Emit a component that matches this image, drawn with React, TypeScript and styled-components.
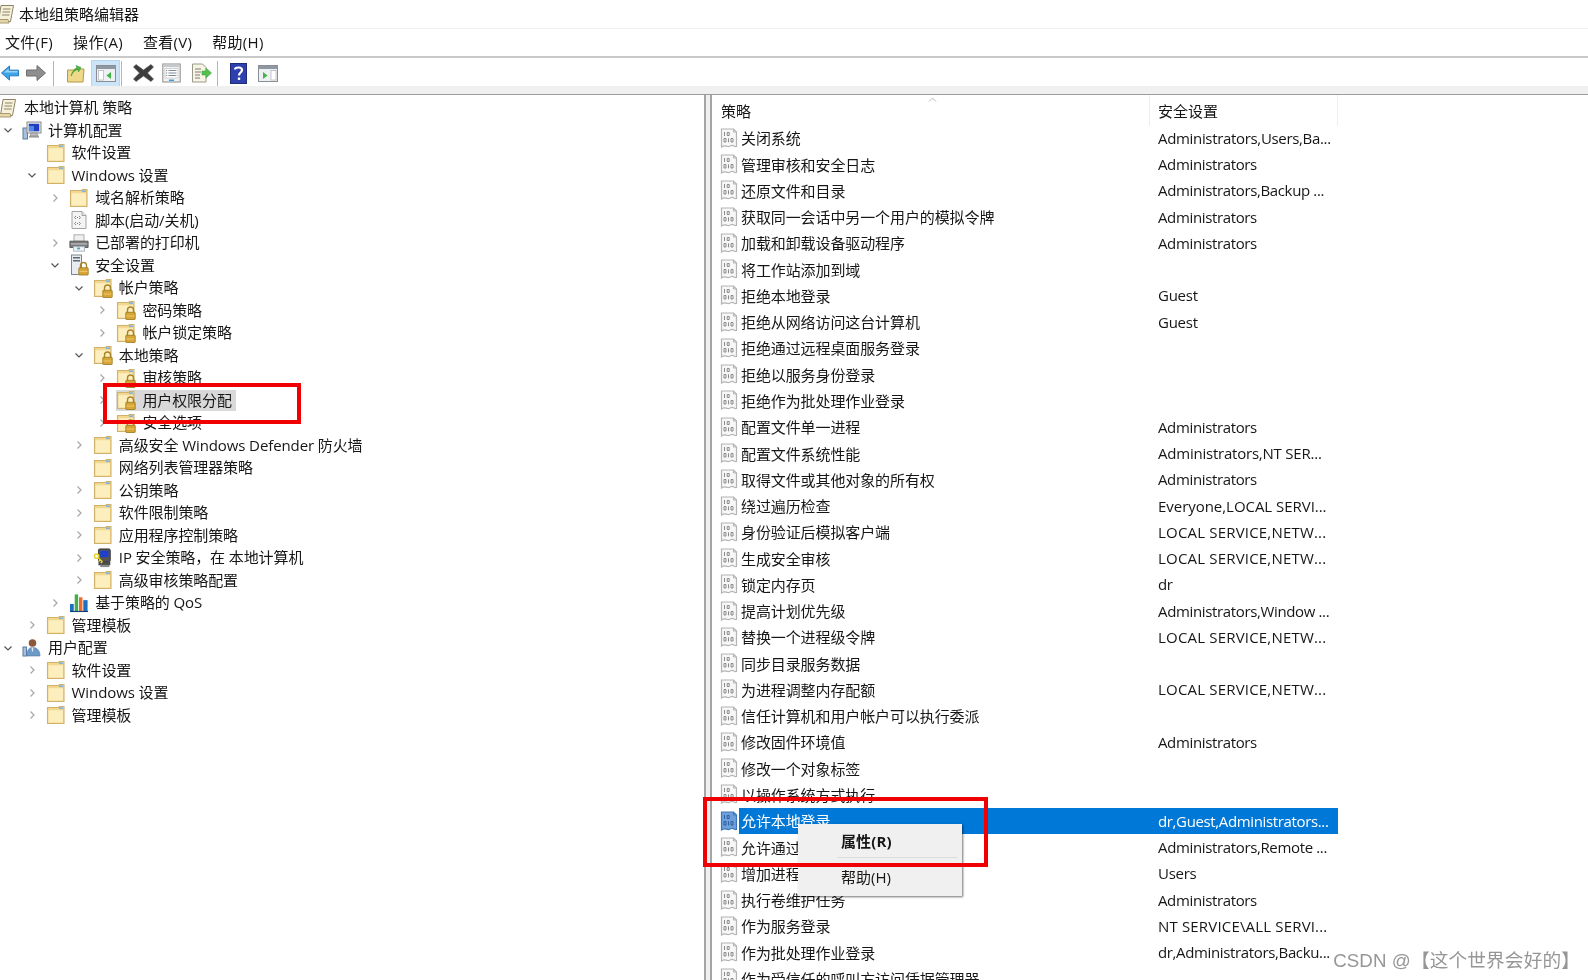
import React from "react";
import styled, { createGlobalStyle } from "styled-components";

const FONT = `"Open Sans", "Noto Sans CJK SC", sans-serif`;
const INK = "#161616";

const Global = createGlobalStyle`
  html, body { margin: 0; padding: 0; background: #fff; }
  body { width: 1588px; height: 980px; overflow: hidden; font-family: ${FONT}; color: ${INK}; }
`;

const Window = styled.div`
  position: relative;
  width: 1588px;
  height: 980px;
  overflow: hidden;
  display: flex;
  flex-direction: column;
  background: #fff;
  font-size: 15px;
  filter: blur(0.45px);
`;
const TitleBar = styled.div`
  height: 29px;
  display: flex;
  align-items: center;
  gap: 3px;
  padding-bottom: 1px;
  font-size: 15px;
  color: #111;
  border-bottom: 1px solid #f0f0f0;
  box-sizing: border-box;
  svg { margin-left: -4px; }
`;
const MenuBar = styled.div`
  height: 29px;
  display: flex;
  align-items: center;
  gap: 20px;
  padding: 0 0 2px 5px;
  box-sizing: border-box;
  border-bottom: 2px solid #c9c9c9;
`;
const MenuItem = styled.span`
  color: ${INK};
  letter-spacing: 0.3px;
`;
const ToolBar = styled.div`
  height: 28px;
  padding-top: 2px;
  box-sizing: border-box;
  display: flex;
  align-items: center;
  background: #fff;
`;
const ToolBtn = styled.div<{ $w?: number; $active?: boolean }>`
  width: ${(p) => p.$w ?? 29}px;
  height: 27px;
  display: flex;
  align-items: center;
  justify-content: center;
  flex: none;
  box-sizing: border-box;
  background: ${(p) => (p.$active ? "#cce4f7" : "transparent")};
  border: 1px solid ${(p) => (p.$active ? "#b4d7f2" : "transparent")};
`;
const ToolSep = styled.div`
  width: 1px;
  height: 25px;
  margin: 0 7px 0 1px;
  background: #b5b5b5;
  flex: none;
`;
const Strip = styled.div`
  height: 8px;
  background: #f0f0f0;
  border-bottom: 1px solid #9c9c9c;
`;
const Panes = styled.div`
  flex: 1;
  min-height: 0;
  display: flex;
  background: #f0f0f0;
`;
const LeftPane = styled.div`
  width: 706px;
  box-sizing: border-box;
  border-right: 2px solid #a5a5a5;
  background: #fff;
  padding-top: 1.5px;
  overflow: hidden;
`;
const RightPane = styled.div`
  margin-left: 4px;
  flex: 1;
  min-width: 0;
  border-left: 2px solid #a5a5a5;
  background: #fff;
  overflow: hidden;
  position: relative;
`;
const TreeRow = styled.div<{ $level: number }>`
  height: 22.5px;
  display: flex;
  align-items: center;
  padding-left: ${(p) => p.$level}px;
  white-space: nowrap;
`;
const Chevron = styled.span`
  width: 16px;
  height: 16px;
  display: flex;
  align-items: center;
  justify-content: center;
  flex: none;
`;
const TreeItem = styled.span<{ $sel?: boolean; $root?: boolean }>`
  display: flex;
  align-items: center;
  height: 21px;
  margin-left: ${(p) => (p.$root ? -2 : 6)}px;
  padding-right: 4px;
  background: ${(p) => (p.$sel ? "#d9d9d9" : "transparent")};
`;
const IconBox = styled.span`
  width: 20px;
  height: 20px;
  margin-right: 6px;
  display: flex;
  align-items: center;
  justify-content: center;
  flex: none;
`;
const TreeLabel = styled.span`
  color: ${INK};
  letter-spacing: -0.1px;
  line-height: 21px;
`;
const ListHeader = styled.div`
  height: 31px;
  width: 626px;
  margin-bottom: -1.3px;
  display: grid;
  grid-template-columns: 438px 188px;
  align-items: center;
  color: ${INK};
  position: relative;
`;
const HeaderCell = styled.div<{ $first?: boolean }>`
  height: 31px;
  display: flex;
  align-items: center;
  box-sizing: border-box;
  padding-left: ${(p) => (p.$first ? 9 : 8)}px;
  border-right: 1px solid #eeeeee;
`;
const SortCaret = styled.svg`
  position: absolute;
  left: 216px;
  top: 2px;
`;
const ListRow = styled.div`
  height: 26.27px;
  width: 626px;
  display: grid;
  grid-template-columns: 27px 411px 188px;
  align-items: center;
  white-space: nowrap;
`;
const RowIcon = styled.span`
  padding-left: 8px;
  display: flex;
  align-items: center;
`;
const RowName = styled.span<{ $sel?: boolean }>`
  height: 100%;
  display: flex;
  align-items: center;
  letter-spacing: -0.1px;
  padding-left: 2px;
  color: ${(p) => (p.$sel ? "#fff" : INK)};
  background: ${(p) => (p.$sel ? "#0078d7" : "transparent")};
`;
const RowValue = styled.span<{ $sel?: boolean; $track: number }>`
  height: 100%;
  display: flex;
  align-items: center;
  padding-left: 8px;
  letter-spacing: ${(p) => p.$track}px;
  color: ${(p) => (p.$sel ? "#fff" : INK)};
  background: ${(p) => (p.$sel ? "#0078d7" : "transparent")};
`;
const ContextMenu = styled.div`
  position: absolute;
  left: 798px;
  top: 824px;
  width: 164px;
  height: 72px;
  box-sizing: border-box;
  background: #f0f0f0;
  box-shadow: 1px 1px 2px rgba(0, 0, 0, 0.55);
  display: flex;
  flex-direction: column;
  padding-left: 43px;
`;
const MenuEntry = styled.div<{ $bold?: boolean }>`
  height: ${(p) => (p.$bold ? 33 : 36)}px;
  display: flex;
  align-items: center;
  font-weight: ${(p) => (p.$bold ? 700 : 400)};
  color: ${INK};
  letter-spacing: ${(p) => (p.$bold ? 0.1 : 0)}px;
`;
const MenuDivider = styled.div`
  height: 1px;
  margin-left: -4px;
  margin-right: 4px;
  background: #dcdcdc;
`;
const RedBox = styled.div<{ $x: number; $y: number; $w: number; $h: number }>`
  position: absolute;
  left: ${(p) => p.$x}px;
  top: ${(p) => p.$y}px;
  width: ${(p) => p.$w}px;
  height: ${(p) => p.$h}px;
  box-sizing: border-box;
  border: 4px solid #f00000;
  pointer-events: none;
`;
const Watermark = styled.div`
  position: absolute;
  right: 8px;
  bottom: 8px;
  font-family: "Liberation Sans", "Noto Sans CJK SC", sans-serif;
  font-size: 18.7px;
  letter-spacing: 0.1px;
  color: #969696;
  background: rgba(255, 255, 255, 0.55);
  white-space: nowrap;
`;

const Lock = () => (
  <g>
    <path d="M11.5 12.500v-2.500a3 3 0 016 0v2.500" fill="none" stroke="#a8842a" strokeWidth="1.400" />
    <rect x="9.800" y="12.300" width="9.400" height="7.200" rx=".6" fill="#d8a636" stroke="#97761f" strokeWidth=".8" />
    <rect x="10.500" y="15.500" width="8" height="1" fill="#edc765" />
  </g>
);
const Folder = ({ lock }: { lock?: boolean }) => (
  <svg width="20" height="20" viewBox="0 0 20 20">
    <path d="M1.500 2.500h11l1-1h4.500v17H1.500z" fill="#f4d78f" stroke="#d1b26c" strokeWidth="1.100" />
    <rect x="2.500" y="5.200" width="14.500" height="12.300" fill="#fdeebe" />
    <rect x="13" y="2.300" width="4" height="1.800" fill="#82b5dc" />
    {lock && <Lock />}
  </svg>
);
const Scroll = () => (
  <svg width="20" height="20" viewBox="0 0 20 20">
    <path d="M5 1.500h12.500l-3 16h-12z" fill="#f7f1da" stroke="#8d8468" />
    <path d="M7 5h7.500M6.500 8h7.500M6 11h7.500" stroke="#8d8468" strokeWidth="1" />
    <path d="M.5 15.500h11.500l1 3.500H1.500z" fill="#e5d6a8" stroke="#a99a72" />
  </svg>
);
const Computer = () => (
  <svg width="20" height="20" viewBox="0 0 20 20">
    <rect x="1" y="8" width="4.500" height="11" fill="#a8c0dc" stroke="#5b7ba0" />
    <rect x="5" y="2" width="14" height="11" fill="#e8e8e8" stroke="#8a8a8a" />
    <rect x="6.800" y="3.800" width="10.400" height="7.500" fill="#1f3fc0" />
    <path d="M7 6h5v5H7z" fill="#4f88e8" />
    <path d="M9 13h6l1 3H8z" fill="#bdbdbd" stroke="#7d7d7d" strokeWidth=".6" />
    <rect x="7" y="16" width="10" height="1.600" fill="#9a9a9a" />
  </svg>
);
const ScriptIc = () => (
  <svg width="20" height="20" viewBox="0 0 20 20">
    <path d="M3 1.500h10l4 4v13H3z" fill="#f4f4f4" stroke="#a3a3a3" />
    <path d="M13 1.500v4h4" fill="#e4e4e4" stroke="#a3a3a3" />
    <path d="M7 6l-1.500 1.500L7 9M10 6l1.500 1.500L10 9M7 12l-1.500 1.500L7 15M10 12l1.500 1.500L10 15" fill="none" stroke="#7b7b7b" strokeWidth=".9" />
    <path d="M8 7.500h1M8 13.500h1" stroke="#7b7b7b" />
  </svg>
);
const Printer = () => (
  <svg width="22" height="20" viewBox="0 0 22 20">
    <rect x="5.500" y="1" width="11" height="7" fill="#f0f0f0" stroke="#a8a8a8" />
    <path d="M1 8h20v7H1z" fill="#7a7a7a" stroke="#565656" />
    <rect x="2" y="10" width="18" height="2" fill="#a9a9a9" />
    <rect x="5" y="14" width="12" height="5" fill="#eef2f6" stroke="#a7b3c0" />
    <rect x="9" y="15" width="3" height="2" fill="#4aa3a3" />
  </svg>
);
const SecurityIc = () => (
  <svg width="20" height="22" viewBox="0 0 20 22">
    <rect x="2.500" y="1" width="10" height="19.500" fill="#e8ecf2" stroke="#7d8590" />
    <rect x="4" y="3" width="7" height="1.500" fill="#5f6670" />
    <rect x="4" y="6" width="7" height="1.500" fill="#5f6670" />
    <g transform="translate(0 1.500)"><Lock /></g>
  </svg>
);
const IpSec = () => (
  <svg width="22" height="22" viewBox="0 0 22 22">
    <rect x="6" y="1" width="13" height="14" rx="1.500" fill="#555" stroke="#333" />
    <rect x="8" y="3" width="9" height="7" fill="#1f3fd0" />
    <rect x="6" y="15" width="13" height="4" fill="#4a4a4a" />
    <rect x="8" y="18.500" width="10" height="2.500" fill="#8a8a8a" />
    <circle cx="4" cy="9" r="2.400" fill="none" stroke="#e6d42a" strokeWidth="1.600" />
    <path d="M5.500 10.500l5 5M8 13l-1.500 1.500M10 15l-1.500 1.500" stroke="#e6d42a" strokeWidth="1.600" />
  </svg>
);
const Qos = () => (
  <svg width="21" height="20" viewBox="0 0 21 20">
    <rect x="1" y="11" width="4" height="8" fill="#1d6fc0" />
    <rect x="6" y="1" width="3.600" height="18" fill="#43b047" />
    <rect x="10.500" y="4" width="3.600" height="15" fill="#ef6a2e" />
    <rect x="15" y="7" width="4.500" height="12" fill="#1d6fc0" />
    <rect x="1" y="18.300" width="19" height="1.200" fill="#0e3f78" />
  </svg>
);
const UserIc = () => (
  <svg width="20" height="20" viewBox="0 0 20 20">
    <rect x="1" y="9" width="3.500" height="9" fill="#a8c0dc" stroke="#5b7ba0" />
    <circle cx="10.500" cy="5" r="3.800" fill="#8a5a3a" />
    <path d="M5 18c0-7 2.500-8.500 5.500-8.500S18 11 18 18z" fill="#6b99c8" stroke="#4f78a3" strokeWidth=".6" />
    <path d="M9.500 9.500h2l-.5 4h-1z" fill="#dfe8f2" />
  </svg>
);
const PolicyIc = ({ sel }: { sel?: boolean }) => {
  const bg = sel ? "#6d9fdb" : "#f7f7f7";
  const line = sel ? "#3f76bb" : "#b4b4b4";
  const txt = sel ? "#2c5fa0" : "#8a8a8a";
  return (
    <svg width="18" height="20" viewBox="0 0 18 20">
      <path d="M1.500 1h12l3 3v14.500c-2 .5-3-1.500-5-1s-2 1.500-4 1-3-1.500-6 .5z" fill={bg} stroke={line} strokeWidth="1.200" />
      <path d="M13.500 1v3h3" fill="none" stroke={line} />
      <path d="M4.500 4v4M7.200 4.500h2v3h-2zM4 10.500h2v3.500H4zM8.500 10.300v4M11 10.500h2v3.500h-2z" fill="none" stroke={txt} strokeWidth="1" />
    </svg>
  );
};

const Chev = ({ open }: { open?: boolean }) =>
  open ? (
    <svg width="10" height="10" viewBox="0 0 10 10">
      <path d="M1.500 3.500L5 7l3.500-3.500" fill="none" stroke="#555" strokeWidth="1.200" />
    </svg>
  ) : (
    <svg width="10" height="10" viewBox="0 0 10 10">
      <path d="M3.500 1.500L7 5 3.500 8.500" fill="none" stroke="#a6a6a6" strokeWidth="1.200" />
    </svg>
  );

type Kind = "folder" | "lock" | "scroll" | "computer" | "script" | "printer" | "security" | "ipsec" | "qos" | "user";
const ICONS: Record<Kind, React.ReactNode> = {
  folder: <Folder />,
  lock: <Folder lock />,
  scroll: <Scroll />,
  computer: <Computer />,
  script: <ScriptIc />,
  printer: <Printer />,
  security: <SecurityIc />,
  ipsec: <IpSec />,
  qos: <Qos />,
  user: <UserIc />,
};

type TreeNode = { t: string; l: number; k: Kind; c?: "o" | "c"; sel?: boolean };
const TREE: TreeNode[] = [
  { t: "计算机配置", l: 0, k: "computer", c: "o" },
  { t: "软件设置", l: 1, k: "folder" },
  { t: "Windows 设置", l: 1, k: "folder", c: "o" },
  { t: "域名解析策略", l: 2, k: "folder", c: "c" },
  { t: "脚本(启动/关机)", l: 2, k: "script" },
  { t: "已部署的打印机", l: 2, k: "printer", c: "c" },
  { t: "安全设置", l: 2, k: "security", c: "o" },
  { t: "帐户策略", l: 3, k: "lock", c: "o" },
  { t: "密码策略", l: 4, k: "lock", c: "c" },
  { t: "帐户锁定策略", l: 4, k: "lock", c: "c" },
  { t: "本地策略", l: 3, k: "lock", c: "o" },
  { t: "审核策略", l: 4, k: "lock", c: "c" },
  { t: "用户权限分配", l: 4, k: "lock", c: "c", sel: true },
  { t: "安全选项", l: 4, k: "lock", c: "c" },
  { t: "高级安全 Windows Defender 防火墙", l: 3, k: "folder", c: "c" },
  { t: "网络列表管理器策略", l: 3, k: "folder" },
  { t: "公钥策略", l: 3, k: "folder", c: "c" },
  { t: "软件限制策略", l: 3, k: "folder", c: "c" },
  { t: "应用程序控制策略", l: 3, k: "folder", c: "c" },
  { t: "IP 安全策略，在 本地计算机", l: 3, k: "ipsec", c: "c" },
  { t: "高级审核策略配置", l: 3, k: "folder", c: "c" },
  { t: "基于策略的 QoS", l: 2, k: "qos", c: "c" },
  { t: "管理模板", l: 1, k: "folder", c: "c" },
  { t: "用户配置", l: 0, k: "user", c: "o" },
  { t: "软件设置", l: 1, k: "folder", c: "c" },
  { t: "Windows 设置", l: 1, k: "folder", c: "c" },
  { t: "管理模板", l: 1, k: "folder", c: "c" },
];

const ROWS: [string, string?][] = [
  ["关闭系统", "Administrators,Users,Ba..."],
  ["管理审核和安全日志", "Administrators"],
  ["还原文件和目录", "Administrators,Backup ..."],
  ["获取同一会话中另一个用户的模拟令牌", "Administrators"],
  ["加载和卸载设备驱动程序", "Administrators"],
  ["将工作站添加到域"],
  ["拒绝本地登录", "Guest"],
  ["拒绝从网络访问这台计算机", "Guest"],
  ["拒绝通过远程桌面服务登录"],
  ["拒绝以服务身份登录"],
  ["拒绝作为批处理作业登录"],
  ["配置文件单一进程", "Administrators"],
  ["配置文件系统性能", "Administrators,NT SER..."],
  ["取得文件或其他对象的所有权", "Administrators"],
  ["绕过遍历检查", "Everyone,LOCAL SERVI..."],
  ["身份验证后模拟客户端", "LOCAL SERVICE,NETW..."],
  ["生成安全审核", "LOCAL SERVICE,NETW..."],
  ["锁定内存页", "dr"],
  ["提高计划优先级", "Administrators,Window ..."],
  ["替换一个进程级令牌", "LOCAL SERVICE,NETW..."],
  ["同步目录服务数据"],
  ["为进程调整内存配额", "LOCAL SERVICE,NETW..."],
  ["信任计算机和用户帐户可以执行委派"],
  ["修改固件环境值", "Administrators"],
  ["修改一个对象标签"],
  ["以操作系统方式执行"],
  ["允许本地登录", "dr,Guest,Administrators..."],
  ["允许通过远程桌面服务登录", "Administrators,Remote ..."],
  ["增加进程工作集", "Users"],
  ["执行卷维护任务", "Administrators"],
  ["作为服务登录", "NT SERVICE\\ALL SERVI..."],
  ["作为批处理作业登录", "dr,Administrators,Backu..."],
  ["作为受信任的呼叫方访问凭据管理器"],
];

// Capitals run wider in the original face, so tracking follows their share of the string.
const trackFor = (s = "") => {
  const caps = (s.match(/[A-Z]/g) ?? []).length;
  return -0.42 + (s.length ? (0.8 * caps) / s.length : 0);
};

const TbBack = () => (
  <svg width="19" height="18" viewBox="0 0 19 18">
    <path d="M.5 9L9 1.500V6h9.500v6H9v4.500z" fill="#3fa3e8" stroke="#1d78c0" />
    <path d="M3 8.500L8 4.500V7h9.500v1.500z" fill="#9ed4f7" />
  </svg>
);
const TbFwd = () => (
  <svg width="20" height="18" viewBox="0 0 20 18">
    <path d="M19.500 9L11 1.500V6H.5v6H11v4.500z" fill="#8f8f8f" stroke="#6d6d6d" />
  </svg>
);
const TbUp = () => (
  <svg width="20" height="20" viewBox="0 0 20 20">
    <path d="M1.500 7h6l1-1h9.500l-1 13H1.500z" fill="#eed98a" stroke="#b39a4b" />
    <path d="M5 13c1-4 3-7 6-8L10 2.500l5 2-2.500 4.500-.5-2.500c-3 .5-5 2.500-7 6.500z" fill="#4cb548" stroke="#2b8a2b" strokeWidth=".5" />
  </svg>
);
const TbPane = ({ flip }: { flip?: boolean }) => (
  <svg width="20" height="17" viewBox="0 0 20 17">
    <rect x=".5" y=".5" width="19" height="16" fill="#eef0f2" stroke="#8a8f96" />
    <rect x="1" y="1" width="18" height="3" fill="#8e98a3" />
    {flip ? (
      <>
        <rect x="13" y="5.500" width="5" height="9.500" fill="#fff" stroke="#a0a5ab" strokeWidth=".6" />
        <path d="M5 7l4.500 3.500L5 14z" fill="#3fb54a" />
      </>
    ) : (
      <>
        <rect x="2.500" y="5.500" width="5" height="9.500" fill="#fff" stroke="#a0a5ab" strokeWidth=".6" />
        <path d="M15 7l-4.500 3.500L15 14z" fill="#3fb54a" />
      </>
    )}
  </svg>
);
const TbDelete = () => (
  <svg width="21" height="20" viewBox="0 0 21 20">
    <path d="M3 1.500l7.500 5.500L18 1.500l2.500 2.500-6 6 6 6-2.500 2.500-7.500-5.500L3 18.500.5 16l6-6-6-6z" fill="#3d3d3d" stroke="#555" strokeWidth=".6" />
  </svg>
);
const TbProps = () => (
  <svg width="19" height="20" viewBox="0 0 19 20">
    <rect x=".8" y="1" width="17.400" height="18" fill="#f2f2f2" stroke="#8b8b8b" />
    <rect x="1.500" y="1.500" width="16" height="2.500" fill="#c5c9cd" />
    <rect x="3" y="5.500" width="13" height="9.500" fill="#fff" stroke="#b7b7b7" strokeWidth=".6" />
    <path d="M6.500 7.500h8M6.500 10h8M6.500 12.500h8M4 7.500h1.200M4 10h1.200M4 12.500h1.200" stroke="#7c8a98" />
    <rect x="7" y="16.500" width="5" height="1.500" fill="#39a0e0" />
  </svg>
);
const TbExport = () => (
  <svg width="21" height="20" viewBox="0 0 21 20">
    <path d="M1.500 1h10l3.500 3.500V19H1.500z" fill="#f7f4e6" stroke="#9a9a8a" />
    <path d="M4 6h6M4 9h6M4 12h5M4 15h5" stroke="#7c7c70" />
    <path d="M11 8h4V5l5.500 5-5.500 5v-3h-4z" fill="#54c04e" stroke="#3c9c3a" strokeWidth=".5" />
  </svg>
);
const TbHelp = () => (
  <svg width="17" height="21" viewBox="0 0 17 21">
    <rect x=".5" y=".5" width="16" height="20" fill="#2e3fae" stroke="#1e2a7a" />
    <path d="M5 6.500c0-2.500 7-3 7 .5 0 2.500-3 2.500-3 5.500" fill="none" stroke="#fff" strokeWidth="2.200" />
    <rect x="7.800" y="14.500" width="2.400" height="2.400" fill="#fff" />
  </svg>
);

export default function App() {
  return (
    <>
      <Global />
      <Window>
        <TitleBar>
          <Scroll />
          <span>本地组策略编辑器</span>
        </TitleBar>
        <MenuBar>
          <MenuItem>文件(F)</MenuItem>
          <MenuItem>操作(A)</MenuItem>
          <MenuItem>查看(V)</MenuItem>
          <MenuItem>帮助(H)</MenuItem>
        </MenuBar>
        <ToolBar>
          <ToolBtn $w={20}><TbBack /></ToolBtn>
          <ToolBtn $w={32}><TbFwd /></ToolBtn>
          <ToolSep />
          <ToolBtn $w={30}><TbUp /></ToolBtn>
          <ToolBtn $active><TbPane /></ToolBtn>
          <ToolSep />
          <ToolBtn $w={28}><TbDelete /></ToolBtn>
          <ToolBtn><TbProps /></ToolBtn>
          <ToolBtn $w={30}><TbExport /></ToolBtn>
          <ToolSep />
          <ToolBtn $w={27}><TbHelp /></ToolBtn>
          <ToolBtn $w={32}><TbPane flip /></ToolBtn>
        </ToolBar>
        <Strip />
        <Panes>
          <LeftPane>
            <TreeRow $level={0}>
              <TreeItem $root>
                <IconBox><Scroll /></IconBox>
                <TreeLabel>本地计算机 策略</TreeLabel>
              </TreeItem>
            </TreeRow>
            {TREE.map((n, i) => (
              <TreeRow key={i} $level={n.l * 23.6}>
                <Chevron>{n.c && <Chev open={n.c === "o"} />}</Chevron>
                <TreeItem $sel={n.sel}>
                  <IconBox>{ICONS[n.k]}</IconBox>
                  <TreeLabel>{n.t}</TreeLabel>
                </TreeItem>
              </TreeRow>
            ))}
          </LeftPane>
          <RightPane>
            <ListHeader>
              <HeaderCell $first>策略</HeaderCell>
              <HeaderCell>安全设置</HeaderCell>
              <SortCaret width="9" height="5" viewBox="0 0 9 5">
                <path d="M1 4.500L4.500 1 8 4.500" fill="none" stroke="#b8b8b8" />
              </SortCaret>
            </ListHeader>
            {ROWS.map(([a, b], i) => {
              const sel = i === 26;
              return (
                <ListRow key={i}>
                  <RowIcon><PolicyIc sel={sel} /></RowIcon>
                  <RowName $sel={sel}>{a}</RowName>
                  <RowValue $sel={sel} $track={trackFor(b)}>{b}</RowValue>
                </ListRow>
              );
            })}
          </RightPane>
        </Panes>
        <ContextMenu>
          <MenuEntry $bold>属性(R)</MenuEntry>
          <MenuDivider />
          <MenuEntry>帮助(H)</MenuEntry>
        </ContextMenu>
        <RedBox $x={103} $y={383} $w={198} $h={41} />
        <RedBox $x={703} $y={797} $w={285} $h={70} />
        <Watermark>CSDN @【这个世界会好的】</Watermark>
      </Window>
    </>
  );
}
